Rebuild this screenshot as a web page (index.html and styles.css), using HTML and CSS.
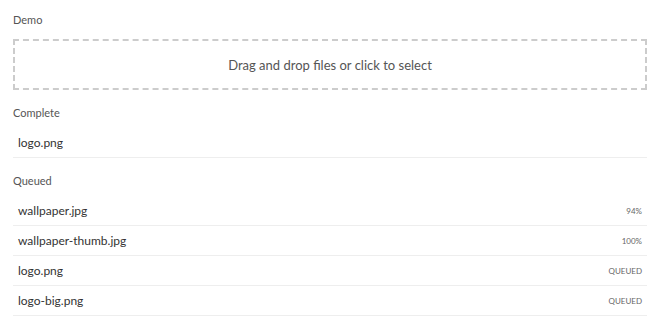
FILE: index.html
```html
<!DOCTYPE html>
<html lang="en">
<head>
  <meta charset="UTF-8" />
  <title>Uploader Demo</title>
  <link rel="stylesheet" href="styles.css">
</head>
<body>
  <div class="demo">
    <div class="label">Demo</div>
    <div class="dropzone">Drag and drop files or click to select</div>

    <div class="label">Complete</div>
    <ul class="files">
      <li><span class="name">logo.png</span></li>
    </ul>

    <div class="label">Queued</div>
    <ul class="files">
      <li><span class="name">wallpaper.jpg</span><span class="status">94%</span></li>
      <li><span class="name">wallpaper-thumb.jpg</span><span class="status">100%</span></li>
      <li><span class="name">logo.png</span><span class="status">QUEUED</span></li>
      <li><span class="name">logo-big.png</span><span class="status">QUEUED</span></li>
    </ul>
  </div>
</body>
</html>
```

FILE: styles.css
```css
body {
  margin: 0;
  font-family: Lato, 'Open Sans', sans-serif;
  background: #fff;
  color: #333;
}

.demo {
  padding: 12px 13px 0 13px;
}

.label {
  font-size: 11px;
  color: #555;
  line-height: 16px;
  margin-bottom: 7px;
}

.dropzone {
  border: 2px dashed #ccc;
  height: 47px;
  display: flex;
  align-items: center;
  justify-content: center;
  font-size: 13px;
  color: #555;
  margin: 11px 0 15px 0;
}

.files {
  list-style: none;
  margin: 0 0 15px 0;
  padding: 0;
}

.files li {
  display: flex;
  justify-content: space-between;
  align-items: center;
  height: 29px;
  padding: 0 5px;
  border-bottom: 1px solid #eee;
}

.name {
  font-size: 12px;
  color: #333;
}

.status {
  font-size: 8px;
  color: #666;
}
```
